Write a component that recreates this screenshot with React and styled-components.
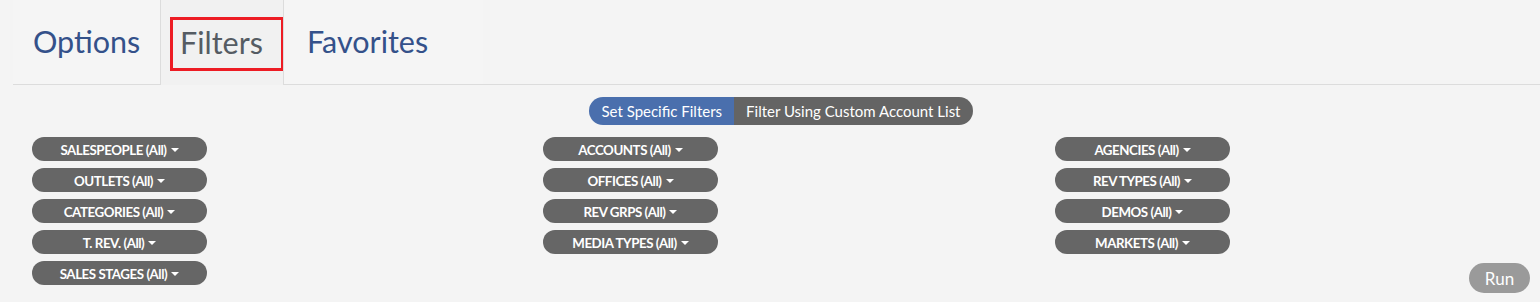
import React from "react";
import styled, { createGlobalStyle } from "styled-components";

const Global = createGlobalStyle`
  html, body { margin: 0; padding: 0; background: #f4f4f4; }
  body { font-family: Lato, "Open Sans", sans-serif; width: 1540px; height: 302px; overflow: hidden; }
`;

const Page = styled.div`
  width: 1540px;
  height: 302px;
  background: #f4f4f4;
  padding-left: 13px;
  box-sizing: border-box;
  display: flex;
  flex-direction: column;
`;

const TabBar = styled.div`
  display: flex;
  height: 85px;
  border-bottom: 1px solid #dcdcdc;
  box-sizing: border-box;
  position: relative;
`;

const Tab = styled.div`
  box-sizing: border-box;
  height: ${p => (p.$active ? "85px" : "84px")};
  width: ${p => p.$w}px;
  padding-left: ${p => p.$pl}px;
  display: flex;
  align-items: center;
  font-size: 30.5px;
  color: ${p => (p.$active ? "#555c63" : "#34518a")};
  background: ${p => (p.$active ? "#f1f1f1" : "#f5f5f5")};
  border-right: ${p => (p.$borderRight ? "1px solid #dcdcdc" : "none")};
  border-left: ${p => (p.$borderLeft ? "1px solid #dcdcdc" : "none")};
  margin-bottom: ${p => (p.$active ? "-1px" : "0")};
  position: relative;
  padding-bottom: 2px;
`;

const Highlight = styled.div`
  position: absolute;
  left: 9px;
  top: 17px;
  width: 114px;
  height: 54px;
  border: 3px solid #ed1c24;
  box-sizing: border-box;
`;

const ToggleRow = styled.div`
  display: flex;
  justify-content: center;
  padding-top: 12px;
  padding-left: 9px;
`;

const Toggle = styled.div`
  display: flex;
  height: 28px;
  border-radius: 14px;
  overflow: hidden;
`;

const ToggleOpt = styled.div`
  display: flex;
  align-items: center;
  padding: 0 ${p => p.$px}px;
  font-size: 15px;
  color: #fff;
  background: ${p => (p.$active ? "#4a6fad" : "#646464")};
`;

const Grid = styled.div`
  display: grid;
  grid-template-columns: 511px 512px 300px;
  padding-left: 19px;
  padding-top: 12px;
`;

const Col = styled.div`
  display: flex;
  flex-direction: column;
  gap: 7px;
`;

const FilterBtn = styled.div`
  width: 175px;
  height: 24px;
  border-radius: 12px;
  background: #666666;
  color: #fff;
  font-weight: 700;
  font-size: 13.3px;
  letter-spacing: -0.45px;
  display: flex;
  align-items: center;
  justify-content: center;
  box-sizing: border-box;
  padding-top: 1px;
`;

const Caret = styled.span`
  display: inline-block;
  width: 0;
  height: 0;
  border-left: 4px solid transparent;
  border-right: 4px solid transparent;
  border-top: 4px solid #fff;
  margin-left: 4px;
  margin-top: 1px;
`;

const RunRow = styled.div`
  display: flex;
  justify-content: flex-end;
  padding-right: 10px;
  margin-top: -22px;
`;

const RunBtn = styled.div`
  width: 61px;
  height: 30px;
  border-radius: 15px;
  background: #9a9a9a;
  color: #fff;
  font-size: 17px;
  display: flex;
  align-items: center;
  justify-content: center;
`;

const cols = [
  ["SALESPEOPLE", "OUTLETS", "CATEGORIES", "T. REV.", "SALES STAGES"],
  ["ACCOUNTS", "OFFICES", "REV GRPS", "MEDIA TYPES"],
  ["AGENCIES", "REV TYPES", "DEMOS", "MARKETS"],
];

export default function App() {
  return (
    <>
      <Global />
      <Page>
        <TabBar>
          <Tab $w={148} $pl={20} $borderRight>Options</Tab>
          <Tab $w={122} $pl={19} $active>
            Filters
            <Highlight />
          </Tab>
          <Tab $w={200} $pl={23} $borderLeft>Favorites</Tab>
        </TabBar>
        <ToggleRow>
          <Toggle>
            <ToggleOpt $active $px={12}>Set Specific Filters</ToggleOpt>
            <ToggleOpt $px={12}>Filter Using Custom Account List</ToggleOpt>
          </Toggle>
        </ToggleRow>
        <Grid>
          {cols.map((c, i) => (
            <Col key={i}>
              {c.map(n => (
                <FilterBtn key={n}>
                  {n} (All)
                  <Caret />
                </FilterBtn>
              ))}
            </Col>
          ))}
        </Grid>
        <RunRow>
          <RunBtn>Run</RunBtn>
        </RunRow>
      </Page>
    </>
  );
}
